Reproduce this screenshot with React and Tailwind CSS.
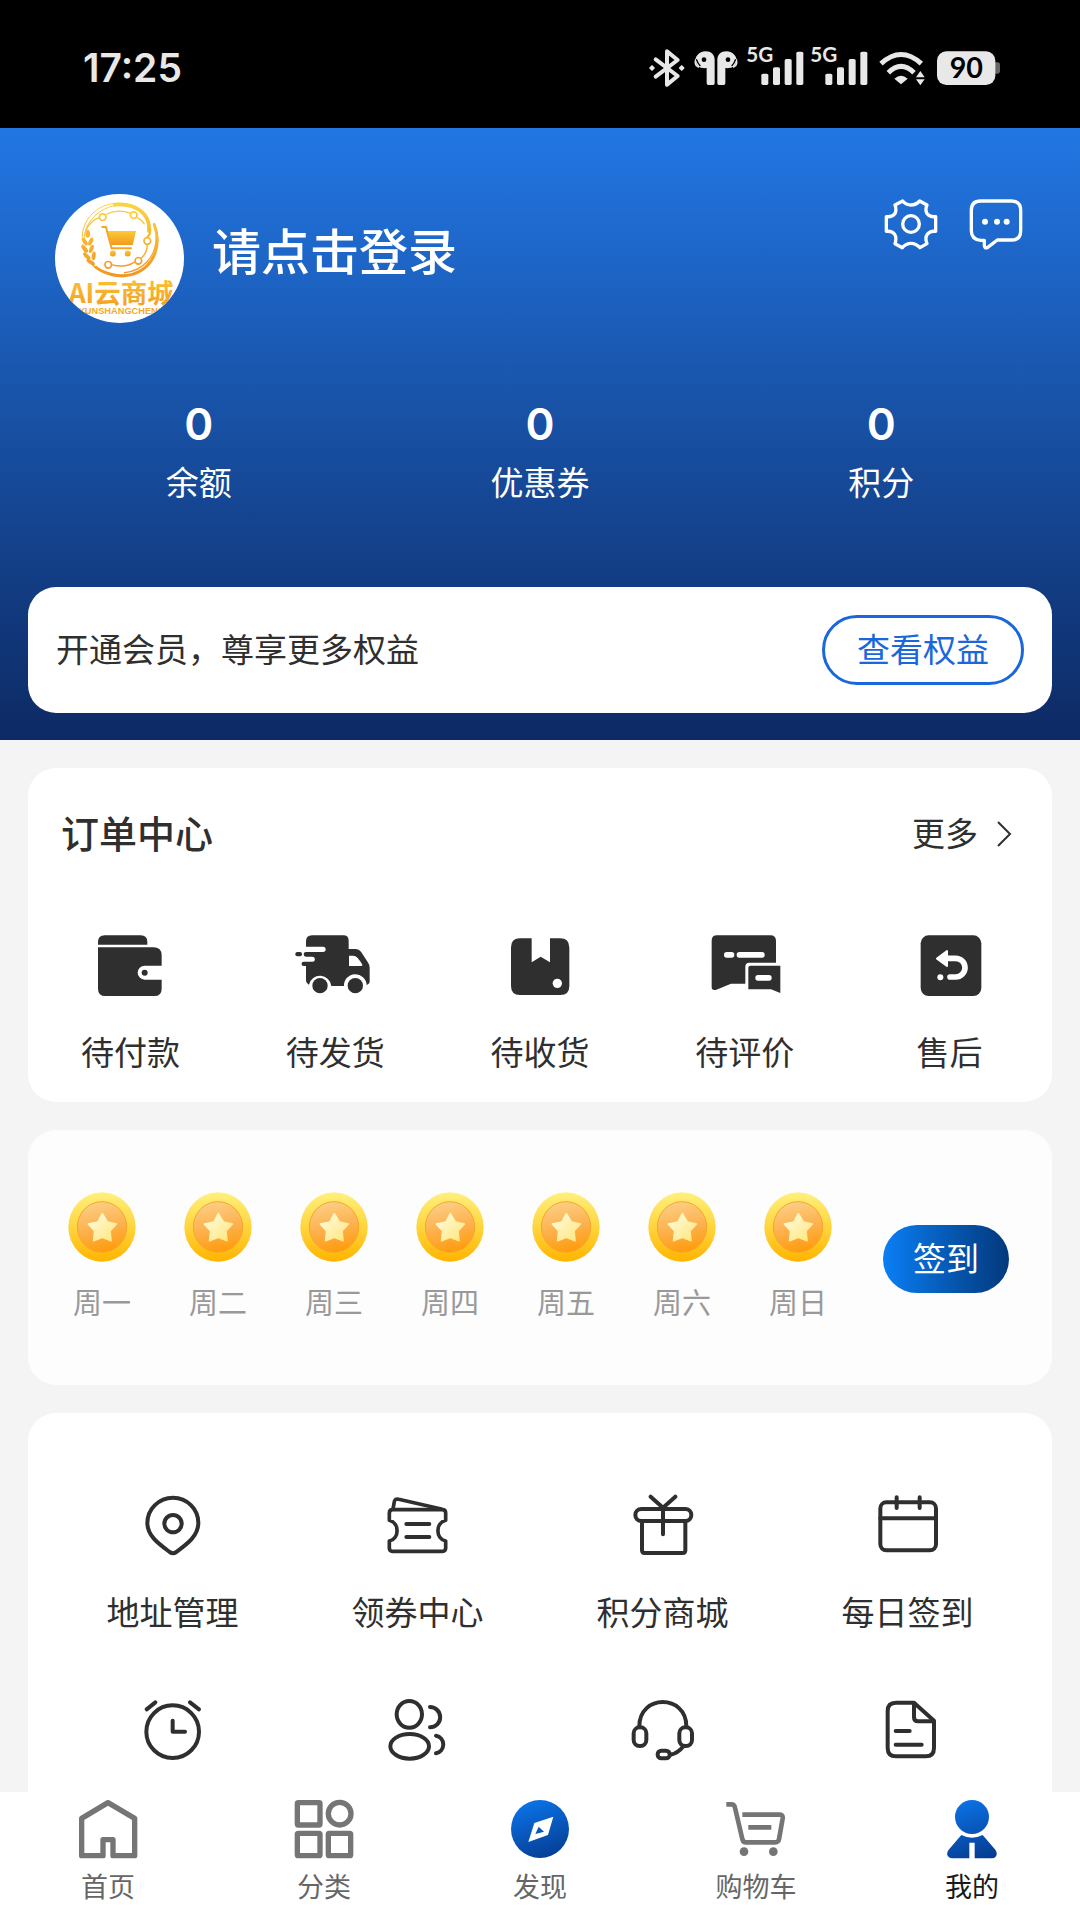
import { useState } from 'react';

const INK = '#2f2f2f';

/* ---------- iconos de la barra de estado ---------- */

function BluetoothIcon() {
  return (
    <svg width="36" height="40" viewBox="0 0 108 120" fill="none" stroke="#e8e8e8" strokeWidth="12" strokeLinejoin="round" strokeLinecap="round">
      <path d="M20 34 L86 84 L54 110 V10 L86 36 L20 86" />
      <path d="M3 60 l6 -6 6 6 -6 6z M92 60 l6 -6 6 6 -6 6z" fill="#e8e8e8" strokeWidth="5" />
    </svg>
  );
}

function EarbudsIcon() {
  return (
    <svg width="46" height="40" viewBox="0 0 138 120" fill="#e8e8e8">
      <path d="M38 10 C54 10 65 20 65 36 V106 Q65 111 60 111 H46 Q41 111 41 106 V60 C24 62 12 56 9 44 C4 26 18 10 38 10Z" />
      <path d="M100 10 C84 10 73 20 73 36 V106 Q73 111 78 111 H92 Q97 111 97 106 V60 C114 62 126 56 129 44 C134 26 120 10 100 10Z" />
      <path d="M14 26 C4 38 4 52 18 58" stroke="#e8e8e8" strokeWidth="5" fill="none" />
      <path d="M124 26 C134 38 134 52 120 58" stroke="#e8e8e8" strokeWidth="5" fill="none" />
      <path d="M10 34 Q14 46 22 54" stroke="#000" strokeWidth="4" fill="none" />
      <path d="M128 34 Q124 46 116 54" stroke="#000" strokeWidth="4" fill="none" />
      <circle cx="33" cy="35" r="7" fill="#000" />
      <circle cx="105" cy="35" r="7" fill="#000" />
    </svg>
  );
}

function SignalIcon() {
  return (
    <svg width="56" height="40" viewBox="0 0 168 120" fill="#e8e8e8" className="overflow-visible">
      <text x="-2" y="43" fontSize="62" fontWeight="700" className="font-[Lato,sans-serif]">5G</text>
      <rect x="43" y="77" width="21" height="34" rx="5" />
      <rect x="78" y="58" width="21" height="53" rx="5" />
      <rect x="113" y="33" width="21" height="78" rx="5" />
      <rect x="148" y="11" width="21" height="100" rx="5" />
    </svg>
  );
}

function WifiIcon() {
  return (
    <svg width="46" height="40" viewBox="0 0 138 120" fill="none" stroke="#e8e8e8" strokeWidth="15">
      <path d="M6 47 Q66 -8 127 47" />
      <path d="M28 74 Q66 36 105 74" />
      <path d="M46 92 Q66 74 86 92 L66 109Z" fill="#e8e8e8" stroke="none" />
      <path d="M111 88 L124 69 L137 88Z M111 94 H137 L124 112Z" fill="#e8e8e8" stroke="none" />
    </svg>
  );
}

function BatteryIcon() {
  return (
    <svg width="63" height="40" viewBox="0 0 189 120">
      <path d="M174 43 h8 q7 0 7 7 v20 q0 7 -7 7 h-8z" fill="#666" />
      <rect x="0" y="10" width="175" height="101" rx="28" fill="#e8e8e8" />
      <text x="88" y="91" textAnchor="middle" fontSize="86" fontWeight="700" fill="#000" className="font-[Lato,sans-serif]">90</text>
    </svg>
  );
}

/* ---------- cabecera ---------- */

function ShopLogo() {
  return (
    <svg className="block size-[129px] rounded-full bg-white" viewBox="0 0 390 390" role="img" aria-label="AI云商城">
      <defs>
        <linearGradient id="gold" x1="0" y1="0" x2="0" y2="1">
          <stop offset="0" stopColor="#fbc93c" />
          <stop offset="1" stopColor="#f49a1c" />
        </linearGradient>
        <linearGradient id="goldRing" gradientUnits="userSpaceOnUse" x1="0" y1="25" x2="0" y2="255">
          <stop offset="0" stopColor="#fbd540" />
          <stop offset="1" stopColor="#f29422" />
        </linearGradient>
      </defs>
      <g fill="none" stroke="url(#goldRing)" strokeLinecap="round">
        <path d="M82 130 C84 72 132 28 190 28 C250 28 284 70 288 122" strokeWidth="3" />
        <path d="M88 150 C82 90 132 36 196 34" strokeWidth="3" />
        <path d="M94 108 Q110 78 132 72 M154 62 Q190 44 228 58" strokeWidth="4" />
        <path d="M180 32 C246 26 290 62 284 112" strokeWidth="11" />
        <path d="M250 72 Q262 78 270 90" strokeWidth="4" />
        <path d="M284 96 C290 108 288 122 280 130" strokeWidth="7" />
        <path d="M300 92 C322 150 304 220 236 242 C196 254 150 242 124 222" strokeWidth="9" />
        <path d="M306 130 C306 190 266 232 210 238" strokeWidth="4" />
        <path d="M279 154 C278 174 270 186 260 194 M240 206 Q216 224 172 214" strokeWidth="4" />
        <path d="M84 154 C92 192 112 224 150 238 C170 248 190 250 208 250" strokeWidth="4" />
        <circle cx="144" cy="70" r="10" strokeWidth="5" />
        <circle cx="238" cy="64" r="10" strokeWidth="5" />
        <circle cx="279" cy="142" r="10" strokeWidth="5" />
        <circle cx="252" cy="202" r="10" strokeWidth="5" />
        <circle cx="161" cy="214" r="10" strokeWidth="5" />
      </g>
      {/* espiga */}
      <g fill="url(#goldRing)">
        <ellipse cx="99" cy="120" rx="7" ry="12" />
        <ellipse cx="90" cy="144" rx="6" ry="13" transform="rotate(-35 90 144)" />
        <ellipse cx="90" cy="166" rx="6" ry="14" transform="rotate(-42 90 166)" />
        <ellipse cx="96" cy="188" rx="6" ry="14" transform="rotate(-48 96 188)" />
        <ellipse cx="108" cy="206" rx="6" ry="15" transform="rotate(-55 108 206)" />
        <ellipse cx="108" cy="144" rx="6" ry="13" transform="rotate(25 108 144)" />
        <ellipse cx="110" cy="166" rx="6" ry="13" transform="rotate(20 110 166)" />
        <ellipse cx="117" cy="187" rx="6" ry="13" transform="rotate(8 117 187)" />
      </g>
      {/* carrito */}
      <g fill="url(#gold)">
        <path d="M158 112 H245 L235 154 H168Z" />
        <circle cx="175" cy="180" r="9" />
        <circle cx="220" cy="180" r="9" />
      </g>
      <path d="M143 100 H154 L171 164 H230" fill="none" stroke="#f6a623" strokeWidth="6" strokeLinecap="round" strokeLinejoin="round" />
      <text x="200" y="329" textAnchor="middle" fontSize="80" fontWeight="700" fill="url(#gold)" className="font-['Noto_Sans_CJK_SC',sans-serif]">AI云商城</text>
      <text x="202" y="364" textAnchor="middle" fontSize="28" fontWeight="700" fill="#f5aa28" className="font-['Liberation_Sans',sans-serif]">YUNSHANGCHENG</text>
    </svg>
  );
}

function GearIcon() {
  return (
    <svg className="size-[60px]" viewBox="65 38 180 180" fill="none" stroke="#fff" strokeWidth="10" strokeLinejoin="round">
      <path d="M130 59 Q140 71 155 71 Q170 71 181 59 L203 71 Q196 87 204 98 Q212 108 229 106 V150 Q212 148 204 159 Q196 170 203 187 L182 199 Q170 186 155 186 Q140 186 129 199 L107 187 Q113 170 106 159 Q98 148 81 150 V106 Q98 108 106 98 Q113 87 107 71Z" />
      <circle cx="155" cy="128" r="25" />
    </svg>
  );
}

function MessageIcon() {
  return (
    <svg className="size-[60px]" viewBox="320 38 180 180" fill="none" stroke="#fff" strokeWidth="10" strokeLinejoin="round">
      <path d="M364 59 H456 Q484 59 484 87 V148 Q484 176 456 176 H414 L384 199 Q375 202 375 192 V177 H364 Q336 174 336 148 V87 Q336 59 364 59Z" />
      <g fill="#fff" stroke="none">
        <circle cx="377" cy="121" r="9" />
        <circle cx="413" cy="121" r="9" />
        <circle cx="442" cy="121" r="9" />
      </g>
    </svg>
  );
}

/* ---------- pedidos ---------- */

function OrderIcon({ children }) {
  return (
    <svg className="h-[72px] w-20" viewBox="0 0 240 216" fill={INK}>
      {children}
    </svg>
  );
}

const orders = [
  {
    label: '待付款',
    icon: (
      <OrderIcon>
        <path d="M24 44 V36 Q24 16 44 16 H152 Q172 16 172 36 V44Z" />
        <path d="M24 52 H190 Q215 52 215 76 V107 H164 A21 21 0 0 0 164 149 H215 V176 Q215 198 193 198 H46 Q24 198 24 176Z" />
        <circle cx="164" cy="128" r="9" />
      </OrderIcon>
    ),
  },
  {
    label: '待发货',
    icon: (
      <OrderIcon>
        <rect x="1" y="66" width="20" height="13" rx="6" />
        <path d="M33 50 V34 Q33 16 51 16 H145 Q161 16 161 32 V57 H182 Q192 57 198 65 L218 96 Q224 104 224 114 V154 Q224 162 215 165 A34 34 0 0 0 147 168 H109 A34 34 0 0 0 42 164 Q33 160 33 150 V108 H26 A6 6 0 0 1 26 95 H52 A7 7 0 0 0 52 80 H33 A6 6 0 0 1 33 66 H84 A8 8 0 0 0 84 50Z" />
        <path d="M162 77 H174 Q182 77 188 84 Q198 96 202 104 Q203 108 198 108 H162Z" fill="#fff" />
        <circle cx="75" cy="167" r="23" />
        <circle cx="181" cy="167" r="23" />
      </OrderIcon>
    ),
  },
  {
    label: '待收货',
    icon: (
      <OrderIcon>
        <path d="M60 25 H95 V97 L122 80 L150 97 V25 H180 Q208 25 208 53 V168 Q208 195 181 195 H60 Q33 195 33 168 V52 Q33 25 60 25Z" />
        <circle cx="172" cy="160" r="14" fill="#fff" />
      </OrderIcon>
    ),
  },
  {
    label: '待评价',
    icon: (
      <OrderIcon>
        <path d="M36 16 H196 Q213 16 213 33 V98 H133 Q121 98 121 110 V161 H78 L32 180 Q20 182 20 172 V32 Q20 16 36 16Z" />
        <path d="M136 107 H226 V189 L198 178 H130 V113 Q130 107 136 107Z" />
        <g fill="#fff">
          <rect x="57" y="66" width="31" height="17" rx="8" />
          <rect x="95" y="66" width="84" height="17" rx="8" />
          <rect x="151" y="135" width="49" height="17" rx="8" />
        </g>
      </OrderIcon>
    ),
  },
  {
    label: '售后',
    icon: (
      <OrderIcon>
        <rect x="32" y="16" width="182" height="182" rx="24" />
        <path d="M108 85 H137 a28 28 0 0 1 0 56 H120" fill="none" stroke="#fff" strokeWidth="17" strokeLinecap="round" />
        <path d="M81 86 L111 63 V108Z" fill="#fff" stroke="#fff" strokeWidth="6" strokeLinejoin="round" />
        <circle cx="91" cy="142" r="9" fill="#fff" />
      </OrderIcon>
    ),
  },
];

/* ---------- moneda ---------- */

function CoinIcon() {
  return (
    <svg className="h-[70px] w-[68px]" viewBox="0 0 204 210">
      <defs>
        <linearGradient id="coinOuter" x1="0" y1="0" x2="0" y2="1">
          <stop offset="0" stopColor="#fff07c" />
          <stop offset="0.5" stopColor="#ffd53e" />
          <stop offset="1" stopColor="#ffb400" />
        </linearGradient>
        <linearGradient id="coinInner" x1="0.3" y1="0" x2="0.5" y2="1">
          <stop offset="0" stopColor="#fccf86" />
          <stop offset="0.55" stopColor="#fdb04c" />
          <stop offset="1" stopColor="#ff9c0c" />
        </linearGradient>
        <linearGradient id="coinStar" x1="0" y1="0" x2="1" y2="1">
          <stop offset="0" stopColor="#fffce0" />
          <stop offset="1" stopColor="#ffe67c" />
        </linearGradient>
      </defs>
      <ellipse cx="102" cy="105" rx="101" ry="104" fill="url(#coinOuter)" />
      <ellipse cx="102" cy="105" rx="74" ry="76" fill="url(#coinInner)" stroke="#f9a62a" strokeWidth="3" />
      <path d="M103 65 L118 90 L145 96 L126 117 L129 146 L103 136 L77 146 L80 117 L61 96 L90 90Z" fill="url(#coinStar)" stroke="url(#coinStar)" strokeWidth="5" strokeLinejoin="round" />
    </svg>
  );
}

const days = ['周一', '周二', '周三', '周四', '周五', '周六', '周日'];

/* ---------- servicios ---------- */

function LineIcon({ children }) {
  return (
    <svg className="size-[72px]" viewBox="0 0 216 216" fill="none" stroke={INK} strokeWidth="12" strokeLinecap="round" strokeLinejoin="round">
      {children}
    </svg>
  );
}

const services = [
  {
    label: '地址管理',
    icon: (
      <LineIcon>
        <path d="M108 23 C150 23 184 57 184 99 C184 138 150 162 118 186 Q108 193 98 186 C66 162 31 138 31 99 C31 57 66 23 108 23Z" />
        <circle cx="108" cy="101" r="26" />
      </LineIcon>
    ),
  },
  {
    label: '领券中心',
    icon: (
      <LineIcon>
        <path d="M32 59 H181 Q191 59 191 69 V91 C160 98 160 146 191 153 V174 Q191 184 181 184 H32 Q22 184 22 174 V153 C53 146 53 98 22 91 V69 Q22 59 32 59Z" strokeWidth="11" />
        <path d="M33 57 L37 35 Q39 25 50 28 L178 57" strokeWidth="11" />
        <path d="M73 102 H142 M73 141 H142" />
      </LineIcon>
    ),
  },
  {
    label: '积分商城',
    icon: (
      <LineIcon>
        <path d="M71 20 L108 53 L145 20 M108 53 V133" />
        <rect x="25" y="57" width="168" height="36" rx="18" />
        <path d="M45 94 V181 Q45 189 53 189 H167 Q175 189 175 181 V94" />
      </LineIcon>
    ),
  },
  {
    label: '每日签到',
    icon: (
      <LineIcon>
        <rect x="25" y="37" width="167" height="144" rx="18" />
        <path d="M25 85 H192 M74 22 V54 M143 22 V54" />
      </LineIcon>
    ),
  },
];

const moreServices = [
  {
    label: '定时提醒',
    icon: (
      <LineIcon>
        <circle cx="107" cy="113" r="79" />
        <path d="M107 80 V113 H144 M29 46 L55 25 M159 25 L186 46" />
      </LineIcon>
    ),
  },
  {
    label: '好友',
    icon: (
      <LineIcon>
        <ellipse cx="82" cy="61" rx="38" ry="40" />
        <ellipse cx="83" cy="157" rx="58" ry="37" />
        <path d="M144 39 A30 30 0 0 1 144 100 M162 125 A27 27 0 0 1 162 178" />
      </LineIcon>
    ),
  },
  {
    label: '客服',
    icon: (
      <LineIcon>
        <path d="M37 97 C37 0 178 0 178 97" />
        <rect x="20" y="100" width="38" height="56" rx="18" />
        <rect x="157" y="100" width="38" height="56" rx="18" />
        <rect x="92" y="170" width="36" height="23" rx="11" />
        <path d="M130 182 Q152 178 168 158" />
      </LineIcon>
    ),
  },
  {
    label: '文档',
    icon: (
      <LineIcon>
        <path d="M72 26 H126 L186 80 V162 Q186 187 161 187 H72 Q47 187 47 162 V51 Q47 26 72 26Z" />
        <path d="M126 28 V70 Q126 82 138 82 H184 M71 111 H113 M71 152 H149" />
      </LineIcon>
    ),
  },
];

/* ---------- pestañas ---------- */

function TabIcon({ children }) {
  return (
    <svg className="size-[60px]" viewBox="0 0 180 180" fill="none" stroke="#757575" strokeWidth="16" strokeLinejoin="round">
      <defs>
        <linearGradient id="tabBlue" gradientUnits="userSpaceOnUse" x1="60" y1="0" x2="120" y2="180">
          <stop offset="0" stopColor="#0b74e8" />
          <stop offset="1" stopColor="#053c92" />
        </linearGradient>
      </defs>
      {children}
    </svg>
  );
}

const tabs = [
  {
    label: '首页',
    icon: (
      <TabIcon>
        <path d="M90 11 L170 58 V170 H105 V122 H75 V170 H11 V58Z" />
      </TabIcon>
    ),
  },
  {
    label: '分类',
    icon: (
      <TabIcon>
        <rect x="10" y="11" width="68" height="67" rx="3" />
        <circle cx="137" cy="44" r="34" />
        <rect x="10" y="103" width="68" height="67" rx="3" />
        <rect x="103" y="103" width="67" height="67" rx="3" />
      </TabIcon>
    ),
  },
  {
    label: '发现',
    icon: (
      <TabIcon>
        <circle cx="90" cy="90" r="87" fill="url(#tabBlue)" stroke="none" />
        <path d="M130 53 L114 108 L55 129 L73 72Z M86 83 L76 105 L102 98Z" fill="#fff" fillRule="evenodd" stroke="none" />
      </TabIcon>
    ),
  },
  {
    label: '购物车',
    icon: (
      <TabIcon>
        <path d="M1 16 H16 Q25 16 27 26 L49 120 Q51 130 60 130 H148 Q157 130 159 121 L170 58 Q171 47 162 47 H49 M67 85 H136" strokeWidth="14" />
        <g fill="#757575" stroke="none">
          <circle cx="54" cy="158" r="13" />
          <circle cx="142" cy="158" r="13" />
        </g>
      </TabIcon>
    ),
  },
  {
    label: '我的',
    icon: (
      <TabIcon>
        <g fill="url(#tabBlue)" stroke="none">
          <circle cx="90" cy="54" r="51" />
          <path d="M58 108 Q90 124 122 108 L160 152 Q168 164 161 173 Q157 178 150 178 H98 V131 H82 V178 H30 Q22 178 18 172 Q12 163 20 152Z" />
        </g>
      </TabIcon>
    ),
  },
];

const stats = [
  { label: '余额', value: 0 },
  { label: '优惠券', value: 0 },
  { label: '积分', value: 0 },
];

export default function App() {
  const [activeTab, setActiveTab] = useState('我的');

  return (
    <div className="flex h-screen w-full flex-col bg-[#f4f4f4] font-[Inter,'Noto_Sans_CJK_SC',sans-serif] text-[33px] leading-12 text-[#2f2f2f]">
      <div className="flex shrink-0 items-center justify-between bg-black pt-11 pr-20 pb-9 pl-[83px]">
        <time className="text-[39px] font-semibold text-[#e8e8e8]">17:25</time>
        <div className="flex items-center">
          <BluetoothIcon />
          <span className="ml-2"><EarbudsIcon /></span>
          <span className="ml-2"><SignalIcon /></span>
          <span className="ml-2"><SignalIcon /></span>
          <span className="ml-3"><WifiIcon /></span>
          <span className="ml-3"><BatteryIcon /></span>
        </div>
      </div>

      <main className="min-h-0 flex-1 overflow-y-auto [scrollbar-width:none]">
        <header className="bg-linear-to-b from-[#2277e4] to-[#0d2a64] px-7 pt-[66px] pb-[27px] text-white">
          <div className="flex items-start pr-[26px] pl-[27px]">
            <button className="flex items-start gap-7">
              <ShopLogo />
              <span className="text-[49px] leading-[118px] font-medium">请点击登录</span>
            </button>
            <div className="ml-auto flex gap-[25px]">
              <button aria-label="设置"><GearIcon /></button>
              <button aria-label="消息"><MessageIcon /></button>
            </div>
          </div>

          <div className="mt-[71px] grid grid-cols-3">
            {stats.map((s) => (
              <button key={s.label} className="flex flex-col items-center">
                <span className="text-[44px] leading-[60px] font-semibold">{s.value}</span>
                <span className="leading-[58px]">{s.label}</span>
              </button>
            ))}
          </div>

          <div className="mt-[75px] flex items-center justify-between rounded-[28px] bg-white p-7 text-[#2f2f2f]">
            <p>开通会员，尊享更多权益</p>
            <button className="rounded-full border-[3px] border-[#1a66dc] px-8 py-2 text-[#1a66dc]">查看权益</button>
          </div>
        </header>

        <div className="flex flex-col gap-7 p-7">
          <section className="rounded-[28px] bg-white pt-9 pb-[25px]">
            <div className="flex items-center justify-between pr-10 pl-[33px] leading-[60px]">
              <h2 className="text-[38px] font-medium">订单中心</h2>
              <a href="#orders" className="flex items-center gap-[18px]">
                更多
                <svg width="16" height="26" viewBox="0 0 16 26" fill="none" stroke={INK} strokeWidth="2">
                  <path d="M2 1 L14 13 L2 25" />
                </svg>
              </a>
            </div>
            <div className="mt-[66px] grid grid-cols-5">
              {orders.map((o) => (
                <button key={o.label} className="flex flex-col items-center gap-[27px]">
                  {o.icon}
                  {o.label}
                </button>
              ))}
            </div>
          </section>

          <section className="flex items-center gap-[27px] rounded-[28px] bg-[#fefdfe] pt-[62px] pr-[43px] pb-[59px] pl-4">
            <ul className="grid flex-1 grid-cols-7">
              {days.map((day) => (
                <li key={day} className="flex flex-col items-center gap-5 text-[29px] leading-11 text-[#999]">
                  <CoinIcon />
                  {day}
                </li>
              ))}
            </ul>
            <button className="rounded-full bg-linear-to-r from-[#0a7ff5] to-[#03397c] px-[30px] py-[10px] text-white">签到</button>
          </section>

          <section className="grid grid-cols-4 gap-y-[57px] rounded-[28px] bg-white px-[22px] pt-[77px] pb-24">
            {services.map((s) => (
              <button key={s.label} className="flex flex-col items-center gap-[27px]">
                {s.icon}
                {s.label}
              </button>
            ))}
            {moreServices.map((s) => (
              <button key={s.label} aria-label={s.label} className="flex flex-col items-center">
                {s.icon}
              </button>
            ))}
          </section>
        </div>
      </main>

      <nav className="grid shrink-0 grid-cols-5 bg-white pt-[7px] pb-3">
        {tabs.map((t) => (
          <a
            key={t.label}
            href={'#' + t.label}
            onClick={() => setActiveTab(t.label)}
            className={`flex flex-col items-center gap-[9px] text-[27px] leading-10 ${activeTab === t.label ? 'text-[#1a1a1a]' : 'text-[#666]'}`}
          >
            {t.icon}
            {t.label}
          </a>
        ))}
      </nav>
    </div>
  );
}
